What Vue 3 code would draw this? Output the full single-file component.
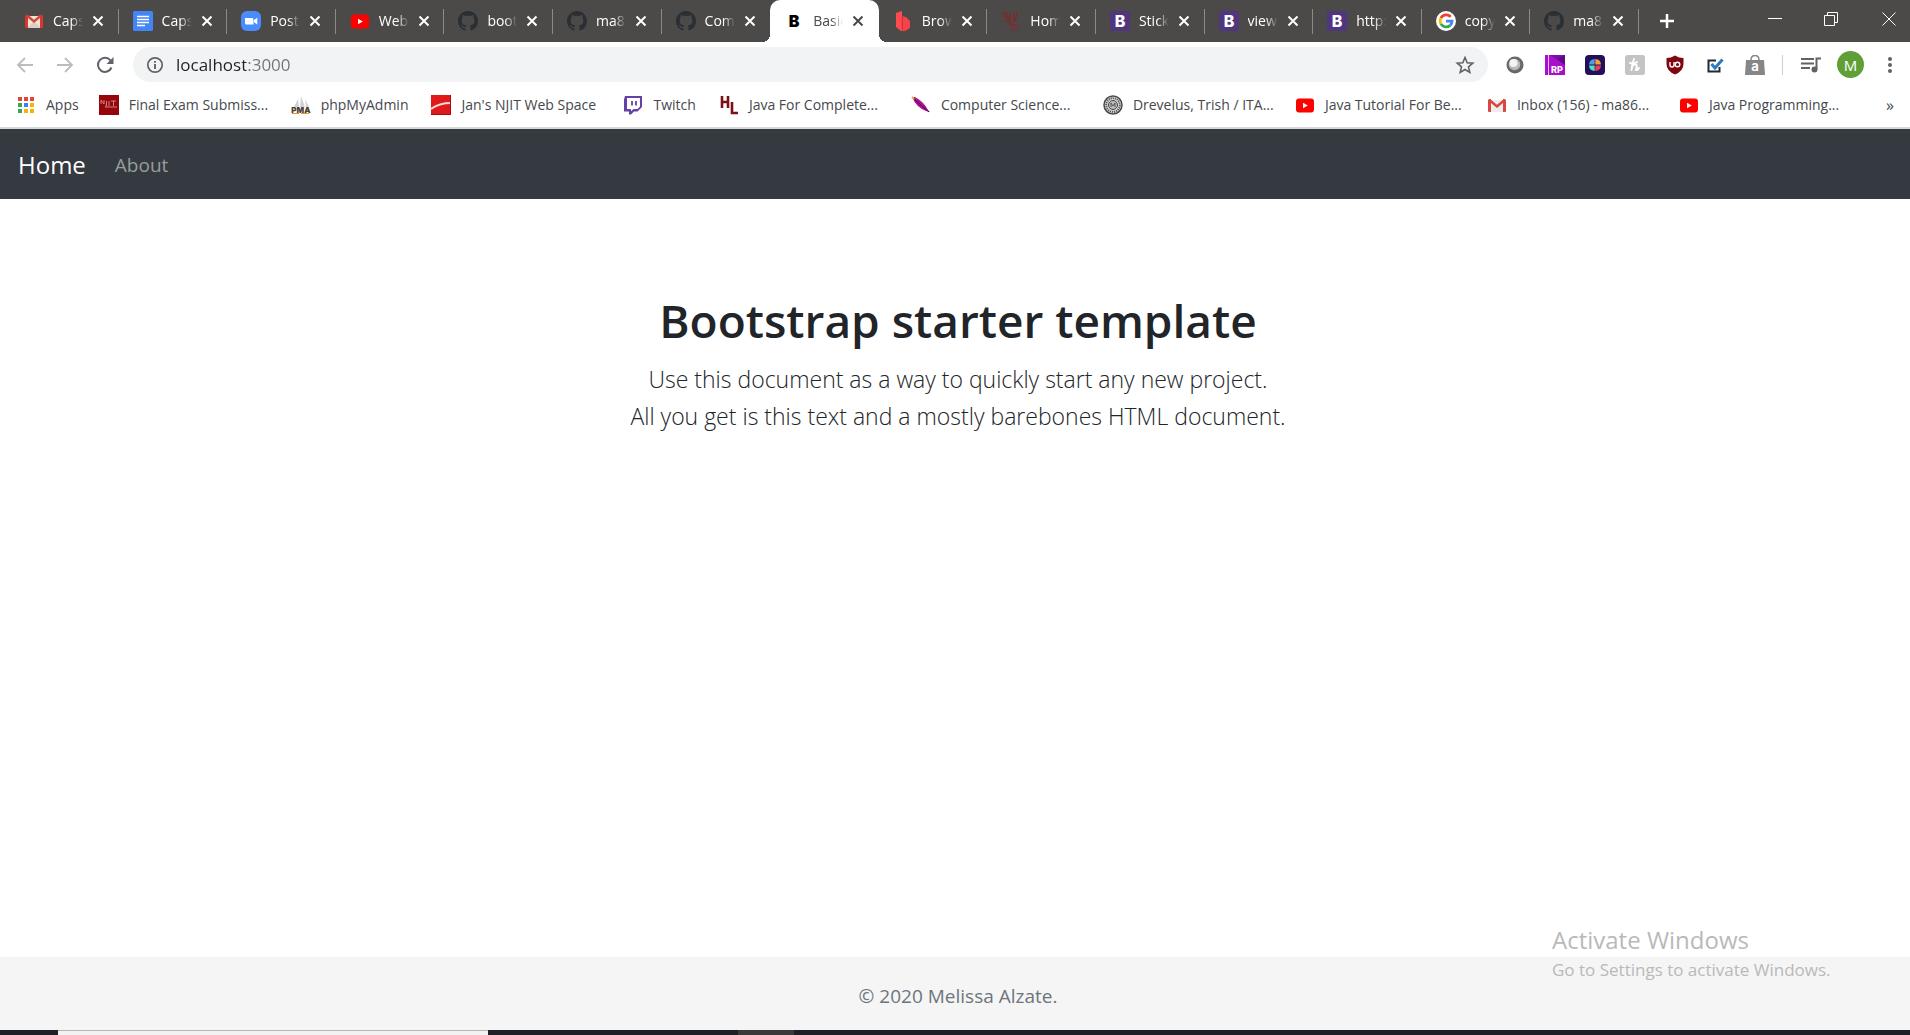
<script setup>
import { h, ref } from 'vue'

const tabs = [
  { icon: 'gmail-tile', title: 'Caps' },
  { icon: 'docs', title: 'Caps' },
  { icon: 'zoom', title: 'Post' },
  { icon: 'youtube', title: 'Web' },
  { icon: 'github', title: 'boot' },
  { icon: 'github', title: 'ma8' },
  { icon: 'github', title: 'Com' },
  { icon: 'letter-b', title: 'Basic', active: true },
  { icon: 'ribbon', title: 'Brow' },
  { icon: 'njit-red', title: 'Hom' },
  { icon: 'bootstrap', title: 'Stick' },
  { icon: 'bootstrap', title: 'view' },
  { icon: 'bootstrap', title: 'http:' },
  { icon: 'google', title: 'copy' },
  { icon: 'github', title: 'ma8' }
]

const extensions = [
  { icon: 'ball', label: 'Lens' },
  { icon: 'rp', label: 'RP' },
  { icon: 'wheel', label: 'Colour wheel' },
  { icon: 'honey', label: 'Honey' },
  { icon: 'ublock', label: 'uBlock' },
  { icon: 'check', label: 'Checker' },
  { icon: 'bag', label: 'Shopping' }
]

const bookmarks = [
  { icon: 'apps', title: 'Apps' },
  { icon: 'njit', title: 'Final Exam Submiss...', wide: true },
  { icon: 'pma', title: 'phpMyAdmin' },
  { icon: 'redwave', title: "Jan's NJIT Web Space", wide: true },
  { icon: 'twitch', title: 'Twitch' },
  { icon: 'hl', title: 'Java For Complete...', wide: true },
  { icon: 'feather', title: 'Computer Science...', wide: true },
  { icon: 'seal', title: 'Drevelus, Trish / ITA...', wide: true },
  { icon: 'youtube', title: 'Java Tutorial For Be...', wide: true },
  { icon: 'gmail', title: 'Inbox (156) - ma86...', wide: true },
  { icon: 'youtube', title: 'Java Programming...', wide: true }
]

// Letters set on top of the icon shapes
const letters = {
  'letter-b': { text: 'B', x: 10, y: 16, size: 16, weight: 900, fill: '#000' },
  bootstrap: { text: 'B', x: 10, y: 16, size: 16, weight: 800, fill: '#fff' },
  rp: { text: 'RP', x: 12, y: 18, size: 9, weight: 800, fill: '#fff' },
  bag: { text: 'a', x: 10, y: 16, size: 13, weight: 700, fill: '#fff' },
  pma: { text: 'PMA', x: 10, y: 18, size: 8, weight: 900, fill: '#4d3f30' }
}

const SiteIcon = ({ name }) => {
  const letter = letters[name]
  return h('svg', { width: 20, height: 20, style: { flex: 'none' }, 'aria-hidden': true }, [
    h('use', { href: '#i-' + name }),
    letter &&
      h(
        'text',
        {
          x: letter.x,
          y: letter.y,
          fill: letter.fill,
          'text-anchor': 'middle',
          'font-family': 'Inter, sans-serif',
          'font-size': letter.size,
          'font-weight': letter.weight
        },
        letter.text
      )
  ])
}
SiteIcon.props = ['name']

const address = ref('localhost:3000')
</script>

<template>
  <div class="window">
    <svg class="sprite" width="0" height="0" aria-hidden="true">
      <symbol id="i-gmail-tile" viewBox="0 0 20 20">
        <path d="M3 5h14v12H3z" fill="#eee5d8" />
        <path d="M3 17l7-7 7 7z" fill="#d9cfc2" />
        <path d="M3 4.500l7 6 7-6" fill="none" stroke="#d9453a" stroke-width="2.400" />
        <path d="M1 5.500q0-1.500 1.500-1.500H4v13H2q-1 0-1-1zM19 5.500q0-1.500-1.500-1.500H16v13h2q1 0 1-1z" fill="#d8362f" />
      </symbol>
      <symbol id="i-gmail" viewBox="0 0 20 20">
        <path d="M3 5h14v12H3z" fill="#ededed" />
        <path d="M3 5.500l7 6 7-6" fill="none" stroke="#d9453a" stroke-width="2.400" />
        <path d="M1 5.500q0-1.500 1.500-1.500H4v13H2q-1 0-1-1zM19 5.500q0-1.500-1.500-1.500H16v13h2q1 0 1-1z" fill="#d8483f" />
      </symbol>
      <symbol id="i-docs" viewBox="0 0 20 20">
        <rect width="20" height="20" rx="1.500" fill="#4285f4" />
        <path d="M4 5.500h12M4 8.500h12M4 11.500h12M4 14.500h8" stroke="#fff" stroke-width="1.700" />
      </symbol>
      <symbol id="i-zoom" viewBox="0 0 20 20">
        <rect width="20" height="20" rx="6" fill="#4a8cff" />
        <path d="M4 7h7q1.500 0 1.500 1.500V13.500H5.500Q4 13.500 4 12zM13 9l3.300-2.200v6.600L13 11.300z" fill="#fff" />
      </symbol>
      <symbol id="i-youtube" viewBox="0 0 20 20">
        <rect x="1" y="3.500" width="18" height="14" rx="3" fill="#f00" />
        <path d="M8 7.700v5.600l4.800-2.800z" fill="#fff" />
      </symbol>
      <symbol id="i-github" viewBox="0 0 16 16">
        <path fill="#2b2f34" d="M8 0C3.580 0 0 3.580 0 8c0 3.540 2.290 6.530 5.470 7.590.4.070.55-.17.55-.38 0-.19-.01-.82-.01-1.490-2.010.37-2.530-.49-2.690-.94-.09-.23-.48-.94-.82-1.130-.28-.15-.68-.52-.01-.53.63-.01 1.080.58 1.230.82.72 1.210 1.870.87 2.330.66.07-.52.28-.87.51-1.070-1.780-.2-3.640-.89-3.640-3.950 0-.87.31-1.590.82-2.150-.08-.2-.36-1.020.08-2.120 0 0 .67-.21 2.200.82.64-.18 1.320-.27 2-.27s1.360.09 2 .27c1.530-1.040 2.200-.82 2.200-.82.44 1.100.16 1.920.08 2.120.51.56.82 1.270.82 2.150 0 3.070-1.870 3.750-3.650 3.950.29.25.54.73.54 1.480 0 1.070-.01 1.930-.01 2.200 0 .21.15.46.55.38A8.010 8.010 0 0 0 16 8c0-4.420-3.580-8-8-8z" />
      </symbol>
      <symbol id="i-ribbon" viewBox="0 0 20 20">
        <path d="M3 2l6-2v17l-1 3-5-4z" fill="#ff4a4f" />
        <path d="M8 5l5 1 4 4v7l-5 3H8z" fill="#f4434a" />
        <path d="M9.500 6v13" stroke="#c8343b" />
      </symbol>
      <symbol id="i-njit-red" viewBox="0 0 20 20">
        <path d="M1 1l5 7M5 1l3 8M9 2v9M13 1v10M16 1l-2 10M4 9l5 3M8 11l5 4" fill="none" stroke="#7c2a2d" stroke-width="1.500" />
        <path d="M8 14h8M11 16.500h10M9 19h7" fill="none" stroke="#86282c" stroke-width="1.200" />
      </symbol>
      <symbol id="i-bootstrap" viewBox="0 0 20 20">
        <rect width="20" height="20" rx="3.500" fill="#50357f" />
      </symbol>
      <symbol id="i-google" viewBox="0 0 20 20">
        <circle cx="10" cy="10" r="10" fill="#fff" />
        <g fill="none" stroke-width="2.800">
          <path d="M14.700 5.900A6 6 0 0 0 4.900 7.200" stroke="#ea4335" />
          <path d="M4.900 7.200a6 6 0 0 0 0 5.700" stroke="#fbbc05" />
          <path d="M4.900 12.900a6 6 0 0 0 9.200 1.500" stroke="#34a853" />
          <path d="M14.100 14.400A6 6 0 0 0 16 10.200H10" stroke="#4285f4" />
        </g>
      </symbol>
      <symbol id="i-ball" viewBox="0 0 20 20">
        <circle cx="10" cy="10" r="8.500" fill="#686868" />
        <circle cx="9.500" cy="9.500" r="5.800" fill="#b9b9b9" />
        <circle cx="8.500" cy="8" r="4" fill="#f4f4f4" />
      </symbol>
      <symbol id="i-rp" viewBox="0 0 20 20">
        <path d="M0 0h20v20H0z" fill="#a80ecb" />
        <path d="M5 0h15v10z" fill="#7d0cab" />
        <path d="M12 4l8-4v10z" fill="#5b0b85" />
        <path d="M3.500 0v20" stroke="#f3b9fb" />
      </symbol>
      <symbol id="i-wheel" viewBox="0 0 20 20">
        <rect width="20" height="20" rx="4" fill="#23105c" />
        <path d="M9.700 9.500H4a6 6 0 0 1 5.700-5.500z" fill="#4f9bea" />
        <path d="M10.300 9.500V4a6 6 0 0 1 5.700 5.500z" fill="#f5a030" />
        <path d="M9.700 10.500V16A6 6 0 0 1 4 10.500z" fill="#52dcc0" />
        <path d="M10.300 10.500H16a6 6 0 0 1-5.700 5.500z" fill="#f0395f" />
      </symbol>
      <symbol id="i-honey" viewBox="0 0 20 20">
        <rect width="20" height="20" rx="2.500" fill="#c4c4c4" />
        <path d="M9 4q-2 5-2.500 11M7 12q2.500-4 4-2.500T11 15q2 0 3-2M5 8q4 1 7-1" fill="none" stroke="#fff" stroke-width="1.900" stroke-linecap="round" />
      </symbol>
      <symbol id="i-ublock" viewBox="0 0 20 20">
        <path d="M10 .5Q14 3 18.500 3v6q0 7-8.500 10.500Q1.500 16 1.500 9V3Q6 3 10 .5z" fill="#800610" />
        <path d="M5 7v3q0 2 2 2t2-2V7" fill="none" stroke="#fff" stroke-width="1.400" />
        <circle cx="12.500" cy="9.500" r="2.300" fill="none" stroke="#fff" stroke-width="1.400" />
      </symbol>
      <symbol id="i-check" viewBox="0 0 20 20">
        <path d="M11 5.500H3.500v11h11V12" fill="none" stroke="#1f2a36" stroke-width="2" />
        <path d="M6.500 9l3.500 4L17.500 4.500" fill="none" stroke="#2a7ac0" stroke-width="3" />
      </symbol>
      <symbol id="i-bag" viewBox="0 0 20 20">
        <path d="M1 5h18l1 15H0z" fill="#868686" />
        <path d="M6 5q0-4.500 4-4.500T14 5" fill="none" stroke="#868686" stroke-width="1.500" />
      </symbol>
      <symbol id="i-apps" viewBox="0 0 20 20">
        <path d="M2 2h4v4H2zM8 2h4v4H8zM14 2h4v4h-4z" fill="#ea4335" />
        <path d="M2 8h4v4H2zM2 14h4v4H2z" fill="#34a853" />
        <path d="M8 8h4v4H8z" fill="#2f86ee" />
        <path d="M14 8h4v4h-4zM8 14h4v4H8zM14 14h4v4h-4z" fill="#f5b400" />
      </symbol>
      <symbol id="i-njit" viewBox="0 0 20 20">
        <path d="M0 0h20v20H0z" fill="#960509" />
        <path d="M2 9V5l3 4V5M7.500 6v5H6M10 6v5M12 6h5M14.500 6v5M6 12h12" fill="none" stroke="#c98684" />
      </symbol>
      <symbol id="i-pma" viewBox="0 0 20 20">
        <path d="M7 4L3 12h5zM10 1L9 12h5zM14 4l4 8h-3z" fill="#cfd1d5" />
        <path d="M1 18.500h7M10 18.500h8" stroke="#e79b2d" />
      </symbol>
      <symbol id="i-redwave" viewBox="0 0 20 20">
        <path d="M0 0h20v20H0z" fill="#e01a1c" />
        <path d="M0 14Q8 8 20 8" fill="none" stroke="#fbdcd8" stroke-width="2" />
        <path d="M0 19.500h20M19.500 0v20" stroke="#a80c0f" />
      </symbol>
      <symbol id="i-twitch" viewBox="0 0 20 20">
        <path d="M2 1h17v11l-4.500 4.500H11L8 19.500H6v-3H1V4.500z" fill="#6441a4" />
        <path d="M4 3h13v8.500L14.500 14H10.500L8 16.200V14H4z" fill="#fff" />
        <path d="M9 6v4.500M13 6v4.500" stroke="#6441a4" stroke-width="1.800" />
      </symbol>
      <symbol id="i-hl" viewBox="0 0 20 20">
        <path d="M3 1v12M9 1v12M3 7h6" fill="none" stroke="#7c1018" stroke-width="2.600" />
        <path d="M13 7v11h6" fill="none" stroke="#7c1018" stroke-width="2.600" />
      </symbol>
      <symbol id="i-feather" viewBox="0 0 20 20">
        <path d="M1 2l3 0Q13 7 17 15l2 2-4-1Q5 12 1 2z" fill="#b00f93" />
        <path d="M4 5l14 12" stroke="#3b0d4c" />
        <path d="M1 2l2 2" stroke="#e3b52a" stroke-width="2" />
      </symbol>
      <symbol id="i-seal" viewBox="0 0 20 20">
        <circle cx="10" cy="10" r="9" fill="#e2e2e2" stroke="#4a4a4a" stroke-width="1.500" />
        <circle cx="10" cy="10" r="6.800" fill="none" stroke="#5a5a5a" stroke-width="2" stroke-dasharray="1.300 .8" />
        <circle cx="10" cy="10" r="4.500" fill="#bdbdbd" stroke="#444" />
        <path d="M8 12V8l2 3 2-3v4" fill="none" stroke="#555" />
      </symbol>
    </svg>

    <header class="chrome">
      <div class="tab-strip">
        <div class="tabs">
          <div v-for="(tab, i) in tabs" :key="i" class="tab" :class="{ active: tab.active }">
            <SiteIcon :name="tab.icon" />
            <span class="tab-title">{{ tab.title }}</span>
            <button class="tab-close" aria-label="Close tab">
              <svg width="12" height="12" viewBox="0 0 12 12"><path d="M1.500 1.500l9 9M10.500 1.500l-9 9" stroke="currentColor" stroke-width="2" /></svg>
            </button>
          </div>
        </div>
        <div class="strip-end">
          <button class="new-tab" aria-label="New tab">
            <svg width="16" height="16" viewBox="0 0 16 16"><path d="M8 1v14M1 8h14" stroke="currentColor" stroke-width="2.500" /></svg>
          </button>
          <div class="controls">
            <button aria-label="Minimize"><svg width="14" height="14" viewBox="0 0 14 14"><path d="M0 6.500h14" stroke="currentColor" /></svg></button>
            <button aria-label="Restore"><svg width="14" height="14" viewBox="0 0 14 14"><path d="M.5 3.500h10v10H.5zM3.500 3V.5h10v10H11" fill="none" stroke="currentColor" /></svg></button>
            <button aria-label="Close"><svg width="14" height="14" viewBox="0 0 14 14"><path d="M.5.5l13 13M13.500.5l-13 13" stroke="currentColor" /></svg></button>
          </div>
        </div>
      </div>

      <div class="toolbar">
        <div class="nav-buttons">
          <button class="faded" aria-label="Back"><svg width="20" height="20" viewBox="0 0 20 20"><path d="M18 10H3M10 3l-7 7 7 7" fill="none" stroke="currentColor" stroke-width="1.800" /></svg></button>
          <button class="faded" aria-label="Forward"><svg width="20" height="20" viewBox="0 0 20 20"><path d="M2 10h15M10 3l7 7-7 7" fill="none" stroke="currentColor" stroke-width="1.800" /></svg></button>
          <button aria-label="Reload"><svg width="20" height="20" viewBox="0 0 20 20"><path d="M16.500 12.500A7 7 0 1 1 15.500 5.500" fill="none" stroke="currentColor" stroke-width="2" /><path d="M18.500 2v7h-7z" fill="currentColor" /></svg></button>
        </div>
        <div class="omnibox">
          <svg width="18" height="18" viewBox="0 0 18 18"><circle cx="9" cy="9" r="7.200" fill="none" stroke="#5f6368" stroke-width="1.700" /><path d="M9 8v5M9 5v1.800" stroke="#5f6368" stroke-width="1.900" /></svg>
          <input v-model="address" type="text" aria-label="Address" />
          <button aria-label="Bookmark this page"><svg width="20" height="20" viewBox="0 0 20 20"><path d="M10 2.500l2.200 5.200 5.600.5-4.300 3.700 1.300 5.500-4.800-2.900-4.800 2.900 1.300-5.500L2.200 8.200l5.600-.5z" fill="none" stroke="#5f6368" stroke-width="1.600" /></svg></button>
        </div>
        <div class="extensions">
          <button v-for="ext in extensions" :key="ext.icon" :aria-label="ext.label">
            <SiteIcon :name="ext.icon" />
          </button>
        </div>
        <div class="profile">
          <button aria-label="Media controls"><svg width="20" height="18" viewBox="0 0 20 18"><path d="M0 3h13M0 7.500h13M0 12h9M15.500 13V2.500H20" fill="none" stroke="#5f6368" stroke-width="2" /><circle cx="13.500" cy="13.500" r="3" fill="#5f6368" /></svg></button>
          <button class="avatar" aria-label="Profile">M</button>
          <button class="menu" aria-label="Menu"><svg width="4" height="18" viewBox="0 0 4 18"><g fill="#5f6368"><circle cx="2" cy="3" r="2" /><circle cx="2" cy="9" r="2" /><circle cx="2" cy="15" r="2" /></g></svg></button>
        </div>
      </div>

      <nav class="bookmarks" aria-label="Bookmarks">
        <a v-for="(mark, i) in bookmarks" :key="i" href="#" :class="{ wide: mark.wide }">
          <SiteIcon :name="mark.icon" />
          <span>{{ mark.title }}</span>
        </a>
        <button aria-label="More bookmarks">»</button>
      </nav>
    </header>

    <nav class="navbar" aria-label="Site">
      <a class="brand" href="#">Home</a>
      <a class="nav-link" href="#">About</a>
    </nav>

    <main class="starter">
      <h1>Bootstrap starter template</h1>
      <p>Use this document as a way to quickly start any new project.<br />All you get is this text and a mostly barebones HTML document.</p>
    </main>

    <footer class="footer">© 2020 Melissa Alzate.</footer>

    <div class="taskbar" aria-hidden="true">
      <span class="start"></span><span class="search"></span><span class="pinned"></span><span class="running"></span>
    </div>

    <aside class="watermark">
      <p class="watermark-title">Activate Windows</p>
      <p>Go to Settings to activate Windows.</p>
    </aside>
  </div>
</template>

<style>
body {
  margin: 0;
  background: #fff;
}
</style>

<style scoped>
.window {
  position: relative;
  display: flex;
  flex-direction: column;
  min-height: 100vh;
  overflow: hidden;
  font-family: "Open Sans", "Noto Sans", sans-serif;
  color: #212529;
}

.sprite {
  position: absolute;
}

button {
  display: flex;
  align-items: center;
  justify-content: center;
  flex: none;
  padding: 0;
  border: 0;
  background: none;
  color: inherit;
  font: inherit;
}

a {
  color: inherit;
  text-decoration: none;
}

.tab-strip {
  display: flex;
  height: 42px;
  padding-left: 10px;
  background: #4b4a48;
  color: #fff;
  font-size: 14px;
}

.tabs {
  display: flex;
  flex: 1;
  min-width: 0;
}

.tab {
  position: relative;
  display: flex;
  align-items: center;
  flex: 1 1 0;
  min-width: 0;
  padding-left: 14px;
}

.tab::after {
  content: "";
  position: absolute;
  right: 0;
  top: 9px;
  width: 1px;
  height: 25px;
  background: #8b8a88;
}

.tab.active {
  border-radius: 10px 10px 0 0;
  background: #fff;
  color: #45494d;
}

.tab.active::before,
.tab.active::after {
  content: "";
  position: absolute;
  top: auto;
  bottom: 0;
  width: 8px;
  height: 8px;
}

.tab.active::before {
  left: -8px;
  background: radial-gradient(circle at 0 0, #4b4a48 8px, #fff 8px);
}

.tab.active::after {
  right: -8px;
  background: radial-gradient(circle at 100% 0, #4b4a48 8px, #fff 8px);
}

.tab:has(+ .active)::after {
  display: none;
}

.tab-title {
  width: 30px;
  margin: 0 9px;
  padding-bottom: 2px;
  overflow: hidden;
  white-space: nowrap;
  mask-image: linear-gradient(90deg, #000 60%, transparent);
}

.strip-end {
  display: flex;
  justify-content: space-between;
  flex: none;
  width: 271px;
}

.new-tab {
  width: 56px;
}

.controls {
  display: flex;
  height: 37px;
}

.controls button {
  width: 56px;
}

.controls button:last-child {
  width: 51px;
  padding-left: 9px;
}

.toolbar {
  display: flex;
  align-items: center;
  height: 45px;
}

.nav-buttons {
  display: flex;
  gap: 20px;
  padding: 0 17px 0 15px;
  color: #5f6368;
}

.nav-buttons .faded {
  color: #babcbe;
}

.omnibox {
  display: flex;
  align-items: center;
  flex: 1;
  min-width: 0;
  height: 35px;
  margin-left: 1px;
  padding: 0 13px;
  border-radius: 18px;
  background: #f1f3f4;
}

.omnibox input {
  flex: 1;
  min-width: 0;
  margin: 0 10px;
  padding: 0 0 0 2px;
  border: 0;
  outline: 0;
  background: linear-gradient(90deg, #202124 72px, #70757a 72px) text;
  color: transparent;
  caret-color: #202124;
  font: 17px "Open Sans", "Noto Sans", sans-serif;
}

.extensions {
  display: flex;
  gap: 20px;
  padding: 0 17px;
}

.profile {
  display: flex;
  align-items: center;
  height: 20px;
  padding-right: 18px;
  border-left: 1px solid #ccced1;
}

.profile button:first-child {
  margin-left: 18px;
}

.avatar {
  width: 27px;
  height: 27px;
  margin: 0 24px 0 16px;
  border-radius: 50%;
  background: #5f9f35;
  color: #fff;
  font-size: 15px;
}

.bookmarks {
  display: flex;
  align-items: center;
  height: 35px;
  padding: 0 16px 5px;
  border-bottom: 2px solid #d5d7da;
  color: #45494d;
  font-size: 14px;
}

.bookmarks a {
  display: flex;
  align-items: center;
  gap: 10px;
  padding-right: 23px;
  white-space: nowrap;
}

.bookmarks a:first-child {
  padding-right: 20px;
}

.bookmarks .wide {
  box-sizing: border-box;
  width: 192px;
  padding-right: 0;
}

.bookmarks button {
  margin-left: auto;
  font-size: 16px;
}

.navbar {
  display: flex;
  align-items: center;
  gap: 29px;
  height: 69px;
  padding: 1px 18px 0;
  background: #343a40;
}

.brand {
  color: #fff;
  font-size: 24px;
}

.nav-link {
  color: #999c9f;
  font-size: 19px;
}

.starter {
  flex: 1;
  padding: 91px 12px 60px 18px;
  text-align: center;
}

.starter h1 {
  margin: 0 0 11px;
  font-size: 46px;
  font-weight: 600;
  line-height: 60px;
}

.starter p {
  margin: 0;
  font-size: 23px;
  font-weight: 300;
  line-height: 37px;
}

.footer {
  padding: 24px 12px 19px 18px;
  background: #f5f5f5;
  color: #6c757d;
  font-size: 19px;
  line-height: 30px;
  text-align: center;
}

.taskbar {
  display: flex;
  height: 5px;
  background: #1f2025;
}

.start {
  width: 58px;
}

.search {
  box-sizing: border-box;
  width: 430px;
  border-top: 1px solid #b4b6b6;
  background: #f2f2f2;
}

.pinned {
  width: 250px;
}

.running {
  width: 56px;
  background: #3a3a3b;
}

.watermark {
  position: absolute;
  right: 74px;
  bottom: 52px;
  width: 284px;
  color: #b9b9b9;
  font-size: 17px;
  line-height: 26px;
  white-space: nowrap;
}

.watermark p {
  margin: 0;
}

.watermark .watermark-title {
  font-size: 24px;
  line-height: 34px;
}
</style>
